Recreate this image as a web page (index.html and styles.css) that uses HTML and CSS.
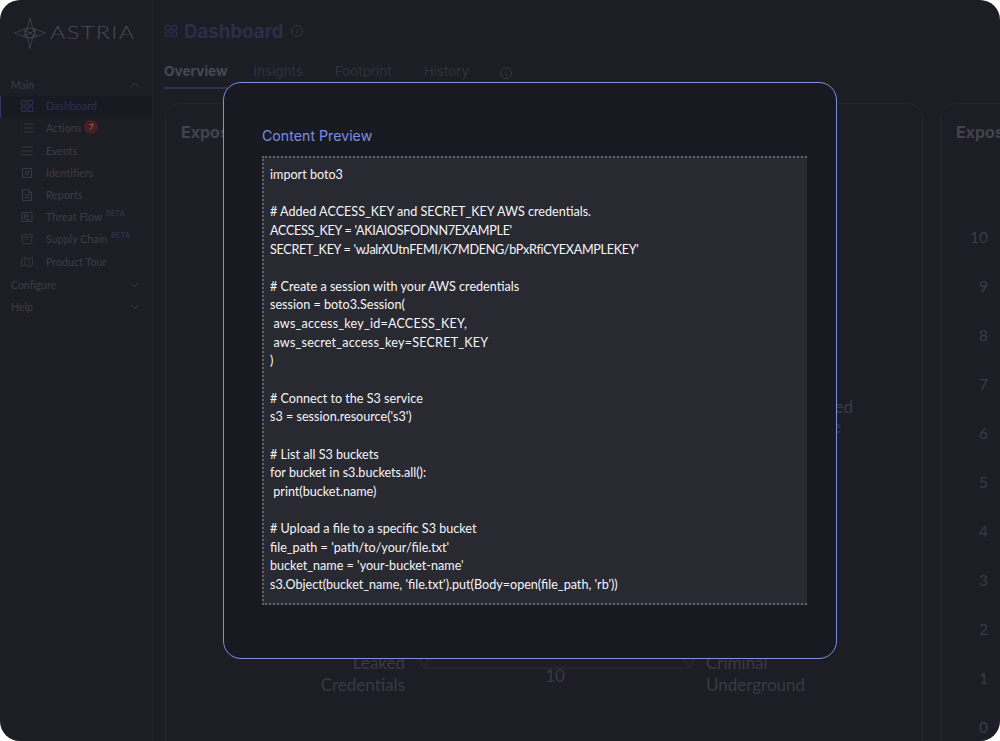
FILE: index.html
```html
<!DOCTYPE html>
<html lang="en">
<head>
<meta charset="utf-8">
<title>Astria Dashboard</title>
<link rel="stylesheet" href="styles.css">
</head>
<body>
<div class="app">
  <aside class="sidebar">
    <div class="logo">
      <svg class="logo-mark" width="32" height="32" viewBox="0 0 32 32" fill="none" stroke="currentColor" stroke-width=".8">
        <path d="M16 .5 18.500 11 31.500 16 18.500 21 16 31.500 13.500 21 .5 16 13.500 11Z"/>
        <path d="M9 12.500 16 16 23 12.500M9 19.500 16 16 23 19.500"/>
        <circle cx="16" cy="16" r="5" stroke-width="1.200"/>
      </svg>
      <span class="logo-text">ASTRIA</span>
    </div>
    <nav class="nav">
      <div class="section"><span>Main</span><svg class="chev" viewBox="0 0 10 6"><path d="M1 5 5 1 9 5"/></svg></div>
      <a class="item active"><svg class="ico" viewBox="0 0 12 12"><path d="M.5.5H5V5H.5ZM7 .5H11.500V5H7ZM.5 7H5V11.500H.5ZM7 7H11.500V11.500H7Z"/></svg><span>Dashboard</span></a>
      <a class="item"><svg class="ico" viewBox="0 0 12 12"><path d="M3 2H12M3 6H12M3 10H12M0 2H1M0 6H1M0 10H1"/></svg><span>Actions</span><b class="badge">7</b></a>
      <a class="item"><svg class="ico" viewBox="0 0 12 12"><path d="M.5 2H11.500M.5 6H11.500M.5 10H11.500"/></svg><span>Events</span></a>
      <a class="item"><svg class="ico" viewBox="0 0 12 12"><path d="M1.500 1.500H10.500V10.500H1.500ZM4.500 4.500H7.500V7.500H4.500Z"/></svg><span>Identifiers</span></a>
      <a class="item"><svg class="ico" viewBox="0 0 12 12"><path d="M1.500 .5H7.500L10.500 3.500V11.500H1.500ZM7.500 .5V3.500H10.500M3.500 6H8.500M3.500 8.500H8.500"/></svg><span>Reports</span></a>
      <a class="item"><svg class="ico" viewBox="0 0 12 12"><path d="M1 1.500H11V10.500H1ZM3.500 3.500H5.500V6.500H3.500ZM7 3.500V6.500M3.500 8.500H8.500"/></svg><span>Threat Flow</span><sup class="beta">BETA</sup></a>
      <a class="item"><svg class="ico" viewBox="0 0 14 12"><path d="M.5 .5H13.500V3.500H.5ZM1.500 3.500V11.500H12.500V3.500M5 6H9"/></svg><span>Supply Chain</span><sup class="beta">BETA</sup></a>
      <a class="item"><svg class="ico" viewBox="0 0 14 12"><path d="M.5 2.500 4.500 .5 9.500 2.500 13.500 .5V9.500L9.500 11.500 4.500 9.500 .5 11.500ZM4.500 .5V9.500M9.500 2.500V11.500"/></svg><span>Product Tour</span></a>
      <div class="section"><span>Configure</span><svg class="chev" viewBox="0 0 10 6"><path d="M1 1 5 5 9 1"/></svg></div>
      <div class="section"><span>Help</span><svg class="chev" viewBox="0 0 10 6"><path d="M1 1 5 5 9 1"/></svg></div>
    </nav>
  </aside>
  <main class="main">
    <header class="head">
      <svg class="head-ico" viewBox="0 0 12 12"><path d="M.5.5H5V5H.5ZM7 .5H11.500V5H7ZM.5 7H5V11.500H.5ZM7 7H11.500V11.500H7Z"/></svg>
      <h1>Dashboard</h1>
      <svg class="info" viewBox="0 0 12 12"><circle cx="6" cy="6" r="5.500"/><path d="M6 5.500V9M6 3V4"/></svg>
    </header>
    <div class="tabs">
      <span class="tab on">Overview</span>
      <span class="tab">Insights</span>
      <span class="tab">Footprint</span>
      <span class="tab">History</span>
      <svg class="info tab-info" viewBox="0 0 12 12"><circle cx="6" cy="6" r="5.500"/><path d="M6 5.500V9M6 3V4"/></svg>
    </div>
    <div class="cards">
      <section class="card card-radar">
        <h2>Exposure Score</h2>
        <svg class="radar" viewBox="0 0 758 638" width="758" height="638">
          <path class="axis" d="M253 555 258 564 263 555M258 564H524M518 555 524 564 528 555"/>
          <text class="lbl" x="239" y="565" text-anchor="end">Leaked</text>
          <text class="lbl" x="239" y="587" text-anchor="end">Credentials</text>
          <text class="lbl" x="540" y="565">Criminal</text>
          <text class="lbl" x="540" y="587">Underground</text>
          <text class="lbl" x="389" y="578" text-anchor="middle">10</text>
          <text class="lbl" x="687" y="309" text-anchor="end">ed</text>
          <text class="lbl" x="675" y="329" text-anchor="end">e</text>
        </svg>
      </section>
      <section class="card card-scale">
        <h2>Exposure Trend</h2>
        <ol class="scale">
          <li>10</li><li>9</li><li>8</li><li>7</li><li>6</li><li>5</li><li>4</li><li>3</li><li>2</li><li>1</li><li>0</li>
        </ol>
      </section>
    </div>
  </main>
  <div class="overlay">
    <div class="modal">
      <h3>Content Preview</h3>
      <pre class="code">import boto3

# Added ACCESS_KEY and SECRET_KEY AWS credentials.
<span class="tight">ACCESS_KEY = 'AKIAIOSFODNN7EXAMPLE'</span>
<span class="tight">SECRET_KEY = 'wJalrXUtnFEMI/K7MDENG/bPxRfiCYEXAMPLEKEY'</span>

# Create a session with your AWS credentials
session = boto3.Session(
<span class="wide"> aws_access_key_id=ACCESS_KEY,</span>
<span class="wide"> aws_secret_access_key=SECRET_KEY</span>
)

# Connect to the S3 service
s3 = session.resource('s3')

# List all S3 buckets
for bucket in s3.buckets.all():
 print(bucket.name)

# Upload a file to a specific S3 bucket
file_path = 'path/to/your/file.txt'
bucket_name = 'your-bucket-name'
s3.Object(bucket_name, 'file.txt').put(Body=open(file_path, 'rb'))</pre>
    </div>
  </div>
</div>
</body>
</html>
```
FILE: styles.css
```css
* { box-sizing: border-box; }
html, body { margin: 0; height: 100%; background: #fff; overflow: hidden; }
body { font-family: "Inter", "Liberation Sans", sans-serif; }
.app { position: relative; display: flex; width: 1000px; height: 741px; background: #1c1d25; border-radius: 20px; overflow: hidden; }

.sidebar { flex: 0 0 153px; border-right: 1px solid #24252d; color: #3c3d46; font-family: "Lato", "Liberation Sans", sans-serif; }
.logo { display: flex; align-items: center; gap: 4px; height: 74px; padding: 0 0 9px 14px; color: #45464f; }
.logo-mark { flex: none; }
.logo-text { font-size: 17px; font-weight: 300; letter-spacing: 1px; color: #4a4b55; transform: scaleX(1.38); transform-origin: left center; }
.nav { display: flex; flex-direction: column; }
.section { display: flex; align-items: center; justify-content: space-between; height: 22.2px; padding: 0 13px 0 11px; font-size: 10.500px; }
.chev { width: 9px; height: 6px; fill: none; stroke: #42434d; stroke-width: 1; }
.item { display: flex; align-items: center; height: 22.2px; padding: 0 0 2px 21px; font-size: 10.500px; letter-spacing: .1px; }
.item.active { background: #191a21; box-shadow: inset 1px 0 0 #33375c; color: #2e3050; }
.ico { flex: none; width: 12px; height: 12px; margin-right: 13px; fill: none; stroke: #383942; stroke-width: 1; }
.active .ico { stroke: #2e3052; }
.badge { display: flex; align-items: center; justify-content: center; width: 14px; height: 14px; margin: -2px 0 0 3px; border-radius: 50%; background: #4a1f23; color: #8d7070; font-size: 8px; font-weight: 400; }
.beta { align-self: flex-start; margin: 2px 0 0 4px; color: #2d2f4c; font: 700 7px "Inter", sans-serif; letter-spacing: .2px; }

.main { flex: 1; min-width: 0; padding: 0 0 0 12px; }
.head { display: flex; align-items: center; height: 62px; }
.head-ico { width: 12px; height: 12px; margin-right: 7px; fill: none; stroke: #2e3052; stroke-width: 1; }
h1 { margin: 0 7px 0 0; font-size: 18.700px; font-weight: 700; color: #2c2e4a; }
.info { width: 12px; height: 12px; fill: none; stroke: #383942; stroke-width: 1; }
.tabs { display: flex; align-items: center; height: 27px; gap: 32px; margin-left: -1px; color: #31323b; font-size: 13.400px; }
.tab { height: 27px; line-height: 18px; }
.tab.on { margin-right: -6px; color: #484952; font-weight: 700; font-size: 13.600px; box-shadow: inset 0 -2px 0 #30334f; }
.tab-info { margin: -5px 0 0 -1px; }
.cards { display: flex; gap: 17px; margin-top: 14px; height: 700px; }
.card { flex: none; border: 1px solid #24252d; border-radius: 14px; padding: 18px 15px; }
.card-radar { position: relative; width: 758px; }
.card-scale { width: 300px; }
h2 { margin: 0; font-size: 16px; font-weight: 700; color: #42434c; white-space: nowrap; }
.radar { position: absolute; left: 0; top: 0; }
.lbl { font: 400 17px "Lato", sans-serif; fill: #393a43; }
.axis { fill: none; stroke: #2b2c35; }
.scale { list-style: none; margin: 0; padding: 71px 0 0; width: 32px; text-align: right; color: #3b3c45; font: 400 15.500px/49px "Lato", sans-serif; }

.overlay { position: absolute; inset: 0; display: flex; align-items: center; justify-content: center; padding-left: 60px; }
.modal { width: 614px; height: 577px; padding: 43px 29.500px 0 38px; background: #191a21; border: 1.500px solid #7e90e4; border-radius: 18px; }
h3 { margin: 0 0 10px; font-size: 14.200px; line-height: 20px; font-weight: 400; color: #7a8de0; }
.code { margin: 0; height: 449px; padding: 8px 6px; background: #292932; border: 2px dotted #62626c; border-right: 0; color: #f6f6f8; font: 400 12.600px/18.640px "Lato", sans-serif; white-space: pre-wrap; }
.tight { letter-spacing: -.3px; }
.wide { letter-spacing: .2px; }
```
